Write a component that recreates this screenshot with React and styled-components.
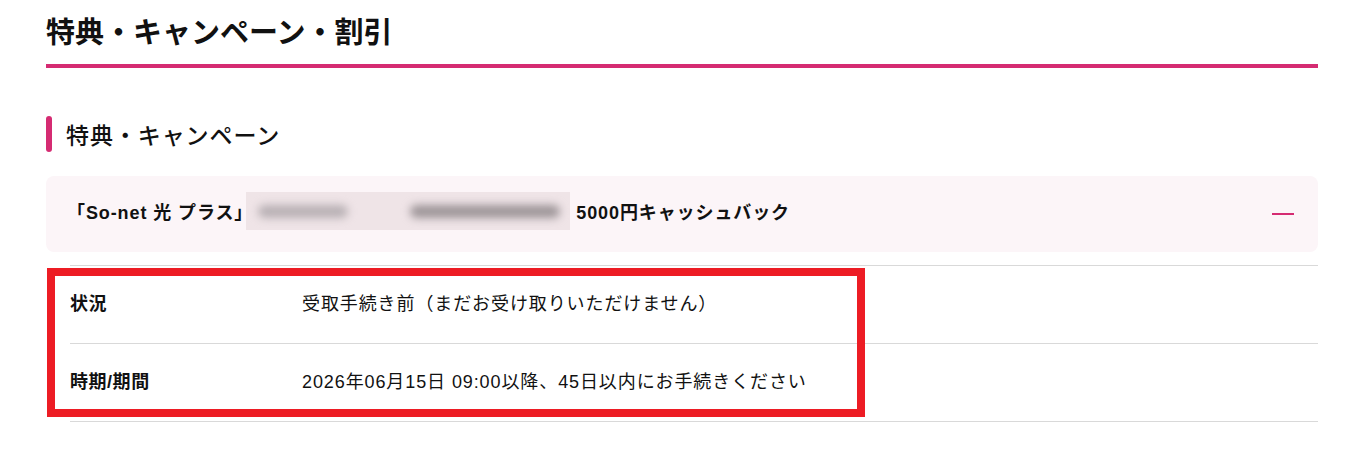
import React from "react";
import styled, { createGlobalStyle } from "styled-components";

const Global = createGlobalStyle`
  html, body { margin: 0; padding: 0; background: #fff; }
  body {
    font-family: "Liberation Sans", "Noto Sans CJK JP", sans-serif;
    color: #111;
  }
`;

const PINK = "#d52b72";

const Page = styled.main`
  width: 1272px;
  padding: 11px 0 40px 46px;
`;

const Title = styled.h1`
  margin: 0;
  font-size: 29px;
  line-height: 44px;
  font-weight: 700;
  letter-spacing: 0;
  padding-bottom: 9px;
  border-bottom: 4px solid ${PINK};
`;

const SectionTitle = styled.h2`
  display: flex;
  align-items: center;
  gap: 14px;
  margin: 48px 0 0;
  height: 36px;
  font-size: 23px;
  font-weight: 500;
  letter-spacing: 0.04em;
  &::before {
    content: "";
    width: 6px;
    height: 36px;
    border-radius: 3px;
    background: ${PINK};
  }
`;

const AccordionHeader = styled.div`
  margin-top: 24px;
  height: 76px;
  display: flex;
  align-items: center;
  justify-content: space-between;
  padding: 0 24px 0 21px;
  background: #fcf5f8;
  border-radius: 8px;
`;

const HeaderText = styled.div`
  display: flex;
  align-items: center;
  padding-bottom: 6px;
  font-size: 18px;
  font-weight: 700;
  letter-spacing: 0.05em;
`;

const Redacted = styled.span`
  display: inline-flex;
  align-items: center;
  gap: 62px;
  width: 324px;
  height: 38px;
  margin: 0 6px 0 -7px;
  padding: 0 12px;
  box-sizing: border-box;
  background: #efe4e7;
  overflow: hidden;
`;

const Blob = styled.span`
  display: block;
  flex: none;
  height: 13px;
  width: ${(p) => p.$w}px;
  border-radius: 7px;
  background: ${(p) => p.$c};
  filter: blur(4px);
`;

const Minus = styled.span`
  display: block;
  width: 22px;
  height: 2px;
  background: ${PINK};
`;

const DetailList = styled.dl`
  position: relative;
  margin: 13px 0 0;
  padding: 0 0 0 24px;
`;

const Row = styled.div`
  display: flex;
  align-items: center;
  height: 72px;
  padding-bottom: 5px;
  border-bottom: 1px solid #d9d9d9;
  &:first-child {
    border-top: 1px solid #d9d9d9;
  }
`;

const Label = styled.dt`
  width: 232px;
  flex: none;
  font-size: 18px;
  font-weight: 700;
  letter-spacing: 0.03em;
`;

const Value = styled.dd`
  margin: 0;
  font-size: 18px;
  letter-spacing: 0.05em;
`;

const Highlight = styled.div`
  position: absolute;
  left: 1px;
  top: 3px;
  width: 818px;
  height: 149px;
  box-sizing: border-box;
  border: 8px solid #ed1c24;
  pointer-events: none;
`;

export default function App() {
  return (
    <>
      <Global />
      <Page>
        <Title>特典・キャンペーン・割引</Title>
        <SectionTitle>特典・キャンペーン</SectionTitle>
        <AccordionHeader>
          <HeaderText>
            「So-net 光 プラス」
            <Redacted aria-hidden="true">
              <Blob $w={90} $c="#b8b0b4" />
              <Blob $w={150} $c="#9d9598" />
            </Redacted>
            5000円キャッシュバック
          </HeaderText>
          <Minus />
        </AccordionHeader>
        <DetailList>
          <Row>
            <Label>状況</Label>
            <Value>受取手続き前（まだお受け取りいただけません）</Value>
          </Row>
          <Row>
            <Label>時期/期間</Label>
            <Value>2026年06月15日 09:00以降、45日以内にお手続きください</Value>
          </Row>
          <Highlight />
        </DetailList>
      </Page>
    </>
  );
}
